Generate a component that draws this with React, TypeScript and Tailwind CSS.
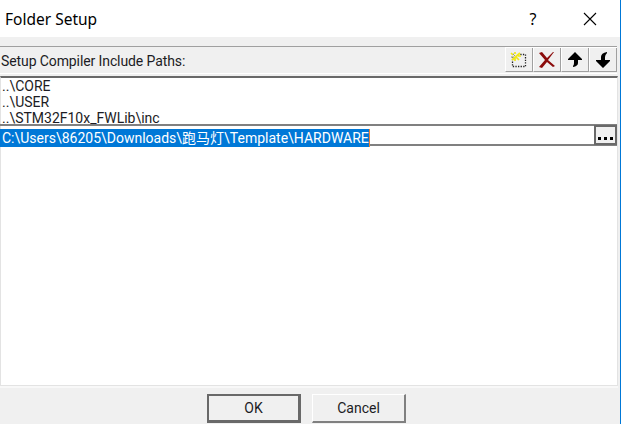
import React from "react";

const uiFont = "font-['Roboto','Noto_Sans_CJK_SC',sans-serif]";

function ToolButton({ children }: { children: React.ReactNode }) {
  return (
    <button className="flex h-[24px] w-[28px] items-center justify-center border-r border-b border-l border-r-[#a0a0a0] border-b-[#a0a0a0] border-l-white bg-[#f0f0f0]">
      {children}
    </button>
  );
}

function NewIcon() {
  return (
    <svg width="18" height="18" viewBox="0 0 18 18">
      <rect x="2.5" y="3.5" width="13" height="12" fill="none" stroke="#222" strokeWidth="1.3" strokeDasharray="1.3 1.3" />
      <path d="M1 2l8 7M9 1L2 9M5 1v8M1 5h10" stroke="#f0f0f0" strokeWidth="2" />
      <path d="M1 2l2 2M6 6l3 3M10 2L2 9M5 1v2M5 7v3M8 5h3" stroke="#f0e818" strokeWidth="1.7" />
      <path d="M3 3l2 2M1 6h3" stroke="#a0a070" strokeWidth="1" />
    </svg>
  );
}

function DeleteIcon() {
  return (
    <svg width="18" height="18" viewBox="0 0 18 18">
      <path d="M1 2l3-1 5 6 6-6h1l-6 8 7 6-2 1-6-5-5 6-3-1 6-7z" fill="#8b0c0c" />
    </svg>
  );
}

function UpIcon() {
  return (
    <svg width="18" height="18" viewBox="0 0 18 18">
      <path d="M9 1l7 7v1h-4v3q0 3-5 4v-1q1-1 1-3V9H2V8z" fill="#000" />
    </svg>
  );
}

function DownIcon() {
  return (
    <svg width="18" height="18" viewBox="0 0 18 18">
      <path d="M9 17l7-7V9h-5V6q0-2 2-4V1q-6 1-6 5v3H2v1z" fill="#000" />
    </svg>
  );
}

export default function App() {
  return (
    <div className={`flex h-[424px] w-[621px] flex-col overflow-hidden border-r border-[#0078d7] bg-[#f0f0f0] text-[#1c1c24] ${uiFont}`}>
      <header className="flex h-[37px] shrink-0 items-center bg-white text-black">
        <h1 className="w-[524px] pl-[5px] font-['Noto_Sans',sans-serif] text-[15.5px] leading-[36px] whitespace-nowrap">Folder Setup</h1>
        <span className="w-[18px] text-center font-['Noto_Sans',sans-serif] text-[16px] leading-[34px]">?</span>
        <svg className="ml-[41px]" width="14" height="14" viewBox="0 0 14 14">
          <path d="M1 1l12 12M13 1L1 13" stroke="#000" strokeWidth="1.1" />
        </svg>
      </header>
      <div className="mt-[9px] mr-[3px] flex h-[28px] shrink-0 justify-between border-t border-b border-t-[#a0a0a0] border-b-white">
        <span className="pl-px text-[14px] leading-[28px] tracking-[-0.1px] whitespace-nowrap">Setup Compiler Include Paths:</span>
        <div className="flex border-t border-white">
          <ToolButton><NewIcon /></ToolButton>
          <ToolButton><DeleteIcon /></ToolButton>
          <ToolButton><UpIcon /></ToolButton>
          <ToolButton><DownIcon /></ToolButton>
        </div>
      </div>
      <main className="mt-[2px] mr-[2px] h-[312px] shrink-0 border-b-2 border-[#f8f8f8]">
        <div className="h-[310px] border border-t-2 border-[#e3e3e3] border-t-[#696969] bg-white">
          <ul className="h-[46px] overflow-hidden pl-px text-[14px] leading-[16px] whitespace-nowrap">
            <li>..\CORE</li>
            <li>..\USER</li>
            <li>..\STM32F10x_FWLib\inc</li>
          </ul>
          <div className="-ml-px flex h-[22px] border-y-2 border-y-[#808080]">
            <div className="flex-1">
              <span className="inline-block h-[18px] border-r border-[#f08030] bg-[#0078d7] pl-[2px] text-[14px] leading-[18px] whitespace-nowrap text-white">C:\Users\86205\Downloads\跑马灯\Template\HARDWARE</span>
            </div>
            <button className="-my-px flex h-5 w-[23px] items-end justify-center gap-[3px] border-2 border-[#696969] bg-[#f0f0f0] pb-[3px]">
              <i className="size-[3px] bg-black" /><i className="size-[3px] bg-black" /><i className="size-[3px] bg-black" />
            </button>
          </div>
        </div>
      </main>
      <footer className="mt-[6px] flex gap-[11px] pl-[207px] text-[14px]">
        <button className="h-[29px] w-[94px] border-2 border-r-[3px] border-b-[3px] border-[#696969] bg-[#f0f0f0] leading-[24px]">OK</button>
        <button className="h-[29px] w-[94px] border border-r-2 border-b-2 border-white border-r-[#808080] border-b-[#808080] bg-[#f0f0f0] leading-[24px]">Cancel</button>
      </footer>
    </div>
  );
}
